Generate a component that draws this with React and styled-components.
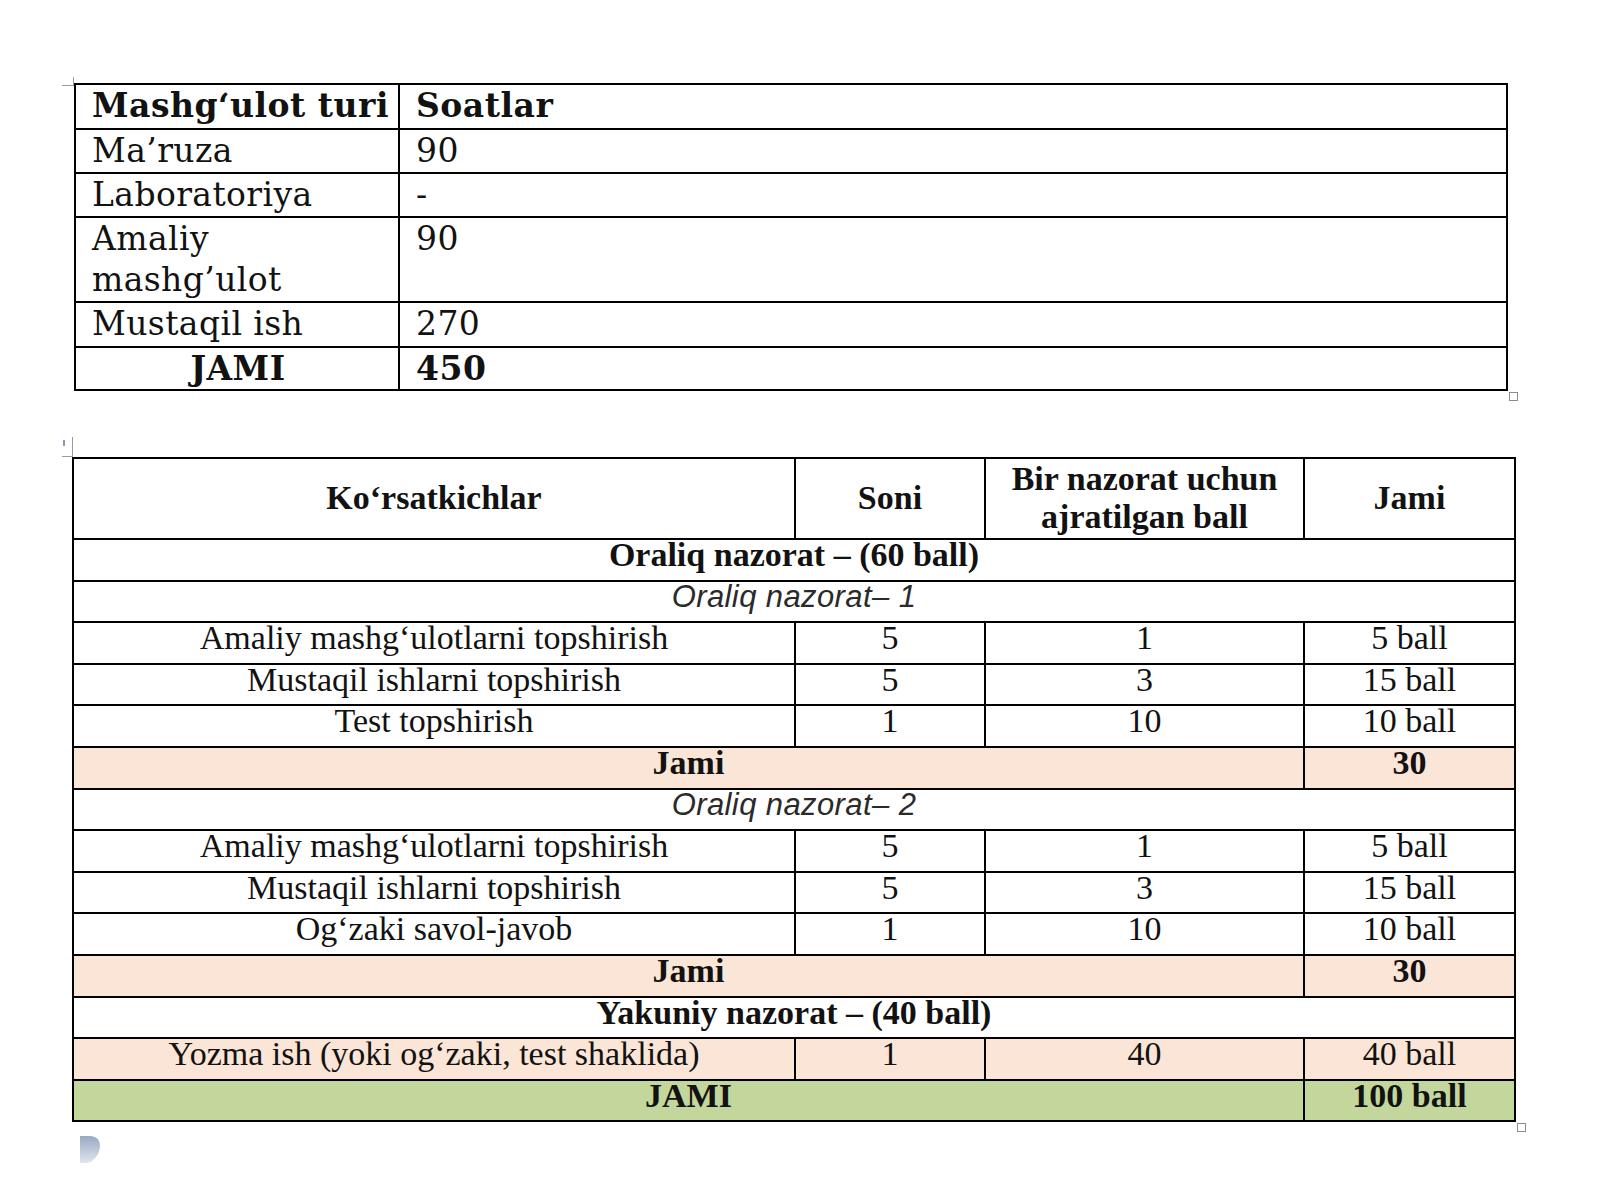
import React from "react";
import styled, { createGlobalStyle } from "styled-components";

const Global = createGlobalStyle`
  html, body { margin: 0; padding: 0; background: #ffffff; }
  body { width: 1600px; height: 1200px; overflow: hidden; }
`;

const Page = styled.div`
  display: flex;
  flex-direction: column;
  align-items: flex-start;
  padding-top: 83px;
`;

const Frame = styled.div`
  position: relative;
  margin-left: ${(p) => p.$left}px;
  margin-top: ${(p) => p.$top || 0}px;
`;

const CornerMark = styled.span`
  position: absolute;
  left: -12px;
  top: -6px;
  width: 11px;
  height: 8px;
  border-right: 1px solid #9a9a9a;
  border-bottom: 1px solid #9a9a9a;
`;

const MoveMark = styled.span`
  position: absolute;
  left: -8px;
  top: -20px;
  width: 8px;
  height: 20px;
  border-right: 1px solid #9a9a9a;
  &::before {
    content: "";
    position: absolute;
    left: -1px;
    top: 3px;
    width: 2px;
    height: 6px;
    background: #8a9ab8;
  }
  &::after {
    content: "";
    position: absolute;
    left: -2px;
    bottom: 0;
    width: 10px;
    border-bottom: 1px solid #9a9a9a;
  }
`;

const ResizeHandle = styled.span`
  position: absolute;
  right: -10px;
  bottom: -10px;
  width: 7px;
  height: 7px;
  border: 1px solid #8c8c8c;
  background: #ffffff;
`;

const HoursTable = styled.table`
  border-collapse: collapse;
  table-layout: fixed;
  width: 1434px;
  font-family: "DejaVu Serif", "Liberation Serif", serif;
  font-size: 33px;
  color: #121212;
`;

const HoursRow = styled.tr`
  height: ${(p) => p.$h}px;
`;

const HoursCell = styled.td`
  border: 2px solid #000;
  padding: 0 14px 0 16px;
  vertical-align: top;
  line-height: 41px;
  white-space: nowrap;
  text-align: ${(p) => (p.$center ? "center" : "left")};
  font-weight: ${(p) => (p.$bold ? 700 : 400)};
  letter-spacing: ${(p) => (p.$bold ? "0.5px" : "0.4px")};
`;

const ScoreTable = styled.table`
  border-collapse: collapse;
  table-layout: fixed;
  width: 1442px;
  font-family: "Liberation Serif", "Times New Roman", serif;
  font-size: 34px;
  color: #121212;
`;

const ScoreRow = styled.tr`
  height: ${(p) => p.$h || 41.6}px;
  background: ${(p) =>
    p.$tone === "peach" ? "#fbe5d6" : p.$tone === "green" ? "#c3d69b" : "#ffffff"};
`;

const HeadCell = styled.th`
  border: 2px solid #000;
  padding: 0 6px 2px;
  vertical-align: middle;
  line-height: 38px;
  text-align: center;
  font-weight: 700;
`;

const Cell = styled.td`
  border: 2px solid #000;
  padding: 0 4px;
  vertical-align: top;
  line-height: 30px;
  text-align: center;
  font-weight: ${(p) => (p.$bold ? 700 : 400)};
`;

const SubCell = styled.td`
  border: 2px solid #000;
  padding: 0 4px;
  vertical-align: top;
  line-height: 30px;
  text-align: center;
  font-family: "Liberation Sans", Arial, sans-serif;
  font-style: italic;
  font-size: 31px;
  font-weight: 300;
  color: #2a2a2a;
  letter-spacing: 0.4px;
`;

const Bubble = styled.svg`
  margin: 14px 0 0 80px;
  display: block;
`;

const hours = [
  { h: 45, name: "Mashg‘ulot turi", value: "Soatlar", bold: true },
  { h: 44, name: "Ma’ruza", value: "90" },
  { h: 44, name: "Laboratoriya", value: "-" },
  { h: 85, name: "Amaliy mashg’ulot", value: "90", wrap: true },
  { h: 45, name: "Mustaqil ish", value: "270" },
  { h: 41, name: "JAMI", value: "450", bold: true, center: true },
];

const block1 = [
  ["Amaliy mashg‘ulotlarni topshirish", "5", "1", "5 ball"],
  ["Mustaqil ishlarni topshirish", "5", "3", "15 ball"],
  ["Test topshirish", "1", "10", "10 ball"],
];

const block2 = [
  ["Amaliy mashg‘ulotlarni topshirish", "5", "1", "5 ball"],
  ["Mustaqil ishlarni topshirish", "5", "3", "15 ball"],
  ["Og‘zaki savol-javob", "1", "10", "10 ball"],
];

function DataRows({ rows }) {
  return rows.map((r, i) => (
    <ScoreRow key={i}>
      {r.map((c, j) => (
        <Cell key={j}>{c}</Cell>
      ))}
    </ScoreRow>
  ));
}

export default function App() {
  return (
    <>
      <Global />
      <Page>
        <Frame $left={74}>
          <CornerMark />
          <HoursTable>
            <colgroup>
              <col style={{ width: 324 }} />
              <col />
            </colgroup>
            <tbody>
              {hours.map((r, i) => (
                <HoursRow key={i} $h={r.h}>
                  <HoursCell $bold={r.bold} $center={r.center}>
                    {r.wrap ? (
                      <>
                        Amaliy
                        <br />
                        mashg’ulot
                      </>
                    ) : (
                      r.name
                    )}
                  </HoursCell>
                  <HoursCell $bold={r.bold}>{r.value}</HoursCell>
                </HoursRow>
              ))}
            </tbody>
          </HoursTable>
          <ResizeHandle />
        </Frame>

        <Frame $left={72} $top={66}>
          <MoveMark />
          <ScoreTable>
            <colgroup>
              <col style={{ width: 722 }} />
              <col style={{ width: 190 }} />
              <col style={{ width: 319 }} />
              <col style={{ width: 211 }} />
            </colgroup>
            <tbody>
              <ScoreRow $h={81}>
                <HeadCell>Ko‘rsatkichlar</HeadCell>
                <HeadCell>Soni</HeadCell>
                <HeadCell>
                  Bir nazorat uchun
                  <br />
                  ajratilgan ball
                </HeadCell>
                <HeadCell>Jami</HeadCell>
              </ScoreRow>
              <ScoreRow>
                <Cell colSpan={4} $bold>
                  Oraliq nazorat – (60 ball)
                </Cell>
              </ScoreRow>
              <ScoreRow>
                <SubCell colSpan={4}>Oraliq nazorat– 1</SubCell>
              </ScoreRow>
              <DataRows rows={block1} />
              <ScoreRow $tone="peach">
                <Cell colSpan={3} $bold>
                  Jami
                </Cell>
                <Cell $bold>30</Cell>
              </ScoreRow>
              <ScoreRow>
                <SubCell colSpan={4}>Oraliq nazorat– 2</SubCell>
              </ScoreRow>
              <DataRows rows={block2} />
              <ScoreRow $tone="peach">
                <Cell colSpan={3} $bold>
                  Jami
                </Cell>
                <Cell $bold>30</Cell>
              </ScoreRow>
              <ScoreRow>
                <Cell colSpan={4} $bold>
                  Yakuniy nazorat – (40 ball)
                </Cell>
              </ScoreRow>
              <ScoreRow $tone="peach">
                <Cell>Yozma ish (yoki og‘zaki, test shaklida)</Cell>
                <Cell>1</Cell>
                <Cell>40</Cell>
                <Cell>40 ball</Cell>
              </ScoreRow>
              <ScoreRow $tone="green">
                <Cell colSpan={3} $bold>
                  JAMI
                </Cell>
                <Cell $bold>100 ball</Cell>
              </ScoreRow>
            </tbody>
          </ScoreTable>
          <ResizeHandle />
        </Frame>

        <Bubble width="22" height="28" viewBox="0 0 22 28">
          <defs>
            <linearGradient id="bub" x1="0" y1="0" x2="0" y2="1">
              <stop offset="0" stopColor="#98a9c2" />
              <stop offset="1" stopColor="#dfe5ee" />
            </linearGradient>
          </defs>
          <path d="M0 0 H11 Q20 1 20 10 Q20 19 11 26 L6 27 H0 Z" fill="url(#bub)" />
        </Bubble>
      </Page>
    </>
  );
}
